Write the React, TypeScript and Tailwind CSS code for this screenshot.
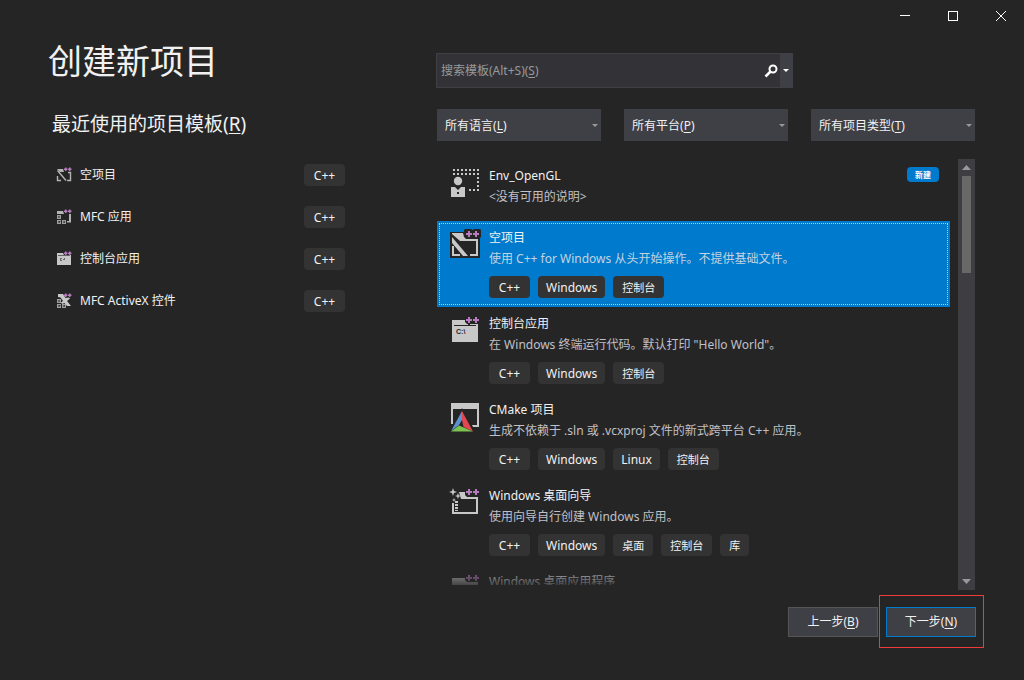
import React from "react";

type IconProps = { className?: string };

const INK = "#c8c8c8";
const SMALL_INK = "#b4b4b4";
const BACK = "#252526";
const PLUM = "#b97bc0";

function PlusPair({ y = 6 }: { y?: number }) {
  return (
    <g fill={PLUM}>
      <path d={`M17 ${y - 1}h2v-2h2v2h2v2h-2v2h-2v-2h-2z`} />
      <path d={`M24 ${y - 1}h2v-2h2v2h2v2h-2v2h-2v-2h-2z`} />
    </g>
  );
}

function CustomTemplateIcon({ className }: IconProps) {
  const dots: [number, number][] = [];
  for (let x = 4; x <= 28; x += 4) dots.push([x, 3], [x, 7]);
  for (let y = 11; y <= 23; y += 4) dots.push([28, y]);
  dots.push([20, 23], [24, 23]);
  return (
    <svg className={className} viewBox="0 0 32 32" aria-hidden="true">
      {dots.map(([x, y]) => (
        <rect key={`${x}-${y}`} x={x} y={y} width="2" height="2" fill={INK} />
      ))}
      <circle cx="9" cy="15" r="4.2" fill={INK} />
      <path d="M2 21h4l3 3 3-3h4v10H2z" fill={INK} />
      <rect x="8" y="26" width="2" height="2" fill={BACK} />
    </svg>
  );
}

function EmptyProjectIcon({ className }: IconProps) {
  return (
    <svg className={className} viewBox="0 0 32 32" aria-hidden="true">
      <path d="M1 4h14V2l1-1h6l1.500 1 1.500-1h6l1 1v7l-1 1v20H1z" fill={BACK} />
      <path d="M3 5h11l1 4 2 2h12v17h-8v-2h6V13H11L3 6z" fill={INK} />
      <path d="M3 9l16 19h-5L3 15z" fill={INK} />
      <path d="M3 18v10h8v-2H5v-8z" fill={INK} />
      <PlusPair />
    </svg>
  );
}

function ConsoleIcon({ className }: IconProps) {
  return (
    <svg className={className} viewBox="0 0 32 32" aria-hidden="true">
      <path d="M3 6h13v2l2 2h11v18H3z" fill={INK} />
      <rect x="5" y="11" width="22" height="1" fill={BACK} />
      <rect x="19" y="9" width="2" height="2" fill={BACK} />
      <text x="7" y="20" fontSize="7" fontWeight="700" fontFamily="Liberation Sans, sans-serif" fill={BACK}>
        C:\
      </text>
      <PlusPair />
    </svg>
  );
}

function CMakeIcon({ className }: IconProps) {
  return (
    <svg className={className} viewBox="0 0 32 32" aria-hidden="true">
      <path d="M2 3h28v24h-6l-1-2h5V9H4v15H2z" fill={INK} />
      <path d="M13 8L1 32h25z" fill={BACK} />
      <path d="M13 11L2 31l8-6 3-5z" fill="#5b92cf" />
      <path d="M13 11l11 20.500L14.500 27 13 20z" fill="#e2474f" />
      <path d="M2 31.500L10 25.500l14 6z" fill="#7cc24f" />
    </svg>
  );
}

function WizardIcon({ className }: IconProps) {
  return (
    <svg className={className} viewBox="0 0 32 32" aria-hidden="true">
      <path d="M10 6h6v3l2 2h11v17H3V17h2v9h22V13H12z" fill={INK} />
      <path d="M4 2l1 3 3 1-3 1-1 3-1-3-3-1 3-1z" fill={INK} />
      <path d="M9 7l.8 2.200L12 10l-2.200.8L9 13l-.8-2.200L6 10l2.200-.8z" fill={INK} />
      <path d="M5 12l.6 1.400L7 14l-1.400.6L5 16l-.6-1.400L3 14l1.400-.6z" fill={INK} />
      <path d="M6 15h3v2H6zM6 18h3v2H6zM6 21h3v2H6zM6 24h3v1H6z" fill={INK} />
      <PlusPair />
    </svg>
  );
}

function DesktopAppIcon({ className }: IconProps) {
  return (
    <svg className={className} viewBox="0 0 32 32" aria-hidden="true">
      <path d="M3 6h13v2l2 2h11v18H3z" fill={INK} />
      <rect x="5" y="13" width="22" height="13" fill={BACK} />
      <PlusPair />
    </svg>
  );
}

function SmallPlus() {
  return (
    <path
      d="M8 1.500h1v-1h1.500v1h1V3h-1v1H9V3H8zM12 1.500h1v-1h1.500v1h1V3h-1v1H13V3h-1z"
      fill={PLUM}
    />
  );
}

function SmallEmptyIcon({ className }: IconProps) {
  return (
    <svg className={className} viewBox="0 0 16 16" aria-hidden="true">
      <path d="M1 2h6l1 3H4z" fill={SMALL_INK} />
      <path d="M1.500 3.500L10 13.500M1.500 9v4.500H5M12 5.500h2.500v8H11" fill="none" stroke={SMALL_INK} strokeWidth="1.400" />
      <SmallPlus />
    </svg>
  );
}

function SmallBoxes() {
  return (
    <>
      <path d="M1 6h4v4H1zM1 11h4v4H1zM6 11h4v4H6z" fill={SMALL_INK} opacity="0.85" />
      <path d="M2 7.500h2v1H2zM2.500 12h2v.7h-1V14h-1zM7.500 12h1.200v2H7.500z" fill={BACK} />
    </>
  );
}

function SmallMfcIcon({ className }: IconProps) {
  return (
    <svg className={className} viewBox="0 0 16 16" aria-hidden="true">
      <path d="M1 2h6l1 3H1zM13 5h2v8.500h-4V12h2z" fill={SMALL_INK} />
      <SmallBoxes />
      <SmallPlus />
    </svg>
  );
}

function SmallConsoleIcon({ className }: IconProps) {
  return (
    <svg className={className} viewBox="0 0 16 16" aria-hidden="true">
      <path d="M1 2h6l1 2h7v10H1z" fill={INK} />
      <path d="M2 4h12v1H2zM4 7h2v1H5v1h1v1H4zM7 8h1v1H7zM8 7h1v2H8z" fill={BACK} opacity="0.6" />
      <SmallPlus />
    </svg>
  );
}

function SmallActiveXIcon({ className }: IconProps) {
  return (
    <svg className={className} viewBox="0 0 16 16" aria-hidden="true">
      <path d="M2 1h5l2.500 4L13 4.500l1 1L11 8l4 5h-4L8.500 10 6 11 5 9.500 7 8 4.500 4.500 2 4z" fill={INK} />
      <SmallBoxes />
      <SmallPlus />
    </svg>
  );
}

function Key({ children }: { children: string }) {
  return (
    <>
      (<span className="underline underline-offset-2">{children}</span>)
    </>
  );
}

function Caret({ className }: IconProps) {
  return (
    <svg className={className} viewBox="0 0 6 3" aria-hidden="true">
      <path d="M0 0h6L3 3z" fill="currentColor" />
    </svg>
  );
}

function Chip({ children }: { children: string }) {
  const latin = /^[\x20-\x7e]+$/.test(children);
  return (
    <span
      className={
        latin
          ? "flex h-[22px] min-w-[41px] items-center justify-center rounded bg-[#333334] px-2 pt-px text-[12px] leading-5 text-[#f1f1f1]"
          : "flex h-[22px] items-center justify-center rounded bg-[#333334] px-[9px] pt-px text-[11px] leading-5 text-[#f1f1f1]"
      }
    >
      {children}
    </span>
  );
}

const recent = [
  { name: "空项目", Icon: SmallEmptyIcon },
  { name: "MFC 应用", Icon: SmallMfcIcon },
  { name: "控制台应用", Icon: SmallConsoleIcon },
  { name: "MFC ActiveX 控件", Icon: SmallActiveXIcon },
];

const filters = [
  { label: "所有语言", hotkey: "L" },
  { label: "所有平台", hotkey: "P" },
  { label: "所有项目类型", hotkey: "T" },
];

type Template = {
  title: string;
  text: string;
  tags: string[];
  Icon: React.ComponentType<IconProps>;
  fresh?: boolean;
  selected?: boolean;
};

const templates: Template[] = [
  { title: "Env_OpenGL", text: "<没有可用的说明>", tags: [], Icon: CustomTemplateIcon, fresh: true },
  {
    title: "空项目",
    text: "使用 C++ for Windows 从头开始操作。不提供基础文件。",
    tags: ["C++", "Windows", "控制台"],
    Icon: EmptyProjectIcon,
    selected: true,
  },
  {
    title: "控制台应用",
    text: "在 Windows 终端运行代码。默认打印 \"Hello World\"。",
    tags: ["C++", "Windows", "控制台"],
    Icon: ConsoleIcon,
  },
  {
    title: "CMake 项目",
    text: "生成不依赖于 .sln 或 .vcxproj 文件的新式跨平台 C++ 应用。",
    tags: ["C++", "Windows", "Linux", "控制台"],
    Icon: CMakeIcon,
  },
  {
    title: "Windows 桌面向导",
    text: "使用向导自行创建 Windows 应用。",
    tags: ["C++", "Windows", "桌面", "控制台", "库"],
    Icon: WizardIcon,
  },
  { title: "Windows 桌面应用程序", text: "", tags: [], Icon: DesktopAppIcon },
];

function TitleBar() {
  return (
    <header className="flex h-8 shrink-0 justify-end text-white">
      <button type="button" aria-label="最小化" className="flex w-12 items-center justify-center">
        <svg className="h-4 w-3.5" viewBox="0 0 14 16" aria-hidden="true">
          <rect x="3" y="7" width="10" height="1" fill="currentColor" />
        </svg>
      </button>
      <button type="button" aria-label="最大化" className="flex w-12 items-center justify-center">
        <svg className="h-4 w-3.5" viewBox="0 0 14 16" aria-hidden="true">
          <rect x="3.500" y="3.500" width="9" height="9" fill="none" stroke="currentColor" />
        </svg>
      </button>
      <button type="button" aria-label="关闭" className="flex w-12 items-center justify-center">
        <svg className="h-4 w-3.5" viewBox="0 0 14 16" aria-hidden="true">
          <path d="M3 3l10 10M13 3L3 13" stroke="currentColor" strokeWidth="1" />
        </svg>
      </button>
    </header>
  );
}

function SearchBox() {
  return (
    <div className="flex h-[35px] w-[357px] border border-[#3f3f46] bg-[#333337]">
      <div className="relative flex-1">
        <input
          id="search"
          type="text"
          placeholder=" "
          className="peer h-full w-full bg-transparent px-1 text-[12px] text-[#f1f1f1] outline-none"
        />
        <label
          htmlFor="search"
          className="pointer-events-none absolute inset-y-0 left-1 hidden items-center text-[12px] text-[#999999] peer-placeholder-shown:flex"
        >
          <span>
            搜索模板(Alt+S)
            <Key>S</Key>
          </span>
        </label>
      </div>
      <button type="button" aria-label="搜索" className="flex w-[18px] items-center justify-center text-white">
        <svg className="h-3.5 w-3.5" viewBox="0 0 14 14" aria-hidden="true">
          <circle cx="9" cy="5" r="3.500" fill="none" stroke="currentColor" strokeWidth="2" />
          <path d="M6.500 7.500L1.500 12.500" stroke="currentColor" strokeWidth="2.500" />
        </svg>
      </button>
      <button type="button" aria-label="搜索选项" className="flex w-3 items-center justify-center bg-[#3f3f46] text-white">
        <Caret className="h-[3px] w-1.5" />
      </button>
    </div>
  );
}

function TemplateRow({ title, text, tags, Icon, fresh, selected }: Template) {
  return (
    <li className={selected ? "bg-[#007acc] p-0.5" : "p-0.5"}>
      <div
        className={
          selected
            ? "flex gap-2 border border-dotted border-[#a9d3f0] pt-[3px] pl-[9px]"
            : "flex gap-2 border border-transparent pt-[3px] pl-[9px]"
        }
      >
        <Icon className="mt-px h-8 w-8 shrink-0" />
        <div className="flex-1">
          <h3 className="text-[12px] leading-[22px] text-[#f1f1f1]">{title}</h3>
          <p
            className={
              selected
                ? "h-5 text-[12px] leading-5 text-[#c5d3e0]"
                : "h-5 text-[12px] leading-5 text-[#c0c0c8]"
            }
          >
            {text}
          </p>
          {tags.length > 0 ? (
            <div className="mt-[7px] mb-1.5 flex gap-2">
              {tags.map((tag) => (
                <Chip key={tag}>{tag}</Chip>
              ))}
            </div>
          ) : (
            <div className="h-[11px]" />
          )}
        </div>
        {fresh && (
          <span className="mt-0.5 mr-2 flex h-[15px] w-8 items-center justify-center rounded-sm bg-[#007acc] pt-px text-[8px] leading-3 font-bold text-white">
            新建
          </span>
        )}
      </div>
    </li>
  );
}

export default function App() {
  return (
    <div className="flex h-screen flex-col overflow-hidden bg-[#252526] font-['Noto_Sans','Noto_Sans_CJK_SC',sans-serif] text-[#f1f1f1]">
      <TitleBar />
      <main className="flex min-h-0 flex-1 pr-[49px] pl-12">
        <section className="w-[297px] shrink-0 pt-1">
          <h1 className="text-[34px] leading-[50px]">创建新项目</h1>
          <h2 className="mt-6 pl-1 text-[19px] leading-7">
            最近使用的项目模板
            <Key>R</Key>
          </h2>
          <ul className="mt-4 pl-2">
            {recent.map(({ name, Icon }) => (
              <li key={name} className="flex h-[42px] items-center">
                <Icon className="h-4 w-4" />
                <a href="#" className="ml-2 flex-1 text-[12px] leading-5">
                  {name}
                </a>
                <Chip>C++</Chip>
              </li>
            ))}
          </ul>
        </section>

        <section className="ml-[91px] flex min-w-0 flex-1 flex-col pt-[21px]">
          <SearchBox />
          <div className="mt-[21px] flex justify-between pl-px">
            {filters.map(({ label, hotkey }) => (
              <button
                key={label}
                type="button"
                aria-haspopup="listbox"
                className="flex h-8 w-[164px] items-center justify-between bg-[#3f3f46] pt-px pr-[3px] pl-2 text-[12px]"
              >
                <span>
                  {label}
                  <Key>{hotkey}</Key>
                </span>
                <Caret className="h-[3px] w-1.5 text-[#999999]" />
              </button>
            ))}
          </div>

          <div className="mt-[18px] flex min-h-0 flex-1 gap-2 pl-px">
            <div className="relative mb-[5px] flex-1 overflow-hidden">
              <ul>
                {templates.map((t) => (
                  <TemplateRow key={t.title} {...t} />
                ))}
              </ul>
              <div className="pointer-events-none absolute inset-x-0 bottom-0 h-6 bg-linear-to-b from-transparent to-[#252526]/80" />
            </div>
            <div className="flex w-[17px] flex-col items-center bg-[#3e3e42] text-[#999999]">
              <svg className="h-[17px] w-[17px]" viewBox="0 0 17 17" aria-hidden="true">
                <path d="M4 11h9L8.500 6z" fill="currentColor" />
              </svg>
              <div className="h-[97px] w-[9px] bg-[#686868]" />
              <svg className="mt-auto h-[17px] w-[17px]" viewBox="0 0 17 17" aria-hidden="true">
                <path d="M4 6h9l-4.500 5z" fill="currentColor" />
              </svg>
            </div>
          </div>
        </section>
      </main>

      <footer className="mt-[5px] flex items-start justify-end gap-px pr-10 pb-8">
        <button type="button" className="mt-3 h-[30px] w-[90px] border border-[#555555] bg-[#3f3f46] text-[12px]">
          上一步
          <Key>B</Key>
        </button>
        <div className="border border-[#f03a3a] pt-[11px] pr-[7px] pb-2.5 pl-1.5">
          <button type="button" className="block h-[30px] w-[90px] border border-[#007acc] bg-[#3f3f46] text-[12px]">
            下一步
            <Key>N</Key>
          </button>
        </div>
      </footer>
    </div>
  );
}
